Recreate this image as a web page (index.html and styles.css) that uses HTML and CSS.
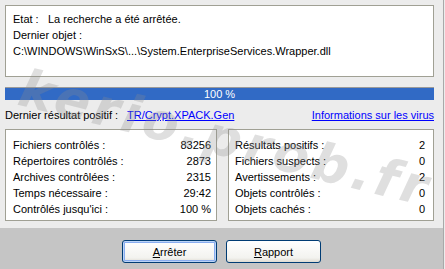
FILE: index.html
```html
<!DOCTYPE html>
<html lang="fr">
<head>
    <meta charset="UTF-8">
    <title>Analyse</title>
    <link rel="stylesheet" href="styles.css">
</head>
<body>

<div class="window">
    <div class="panel">
        <!-- Etat de la recherche -->
        <div class="status-box">
            <div class="line"><span class="status-label">Etat :</span>La recherche a été arrêtée.</div>
            <div class="line">Dernier objet :</div>
            <div class="line">C:\WINDOWS\WinSxS\...\System.EnterpriseServices.Wrapper.dll</div>
        </div>

        <div class="progress"><span>100 %</span></div>

        <div class="last-result">
            <span class="last-label">Dernier résultat positif :</span>
            <a href="#" class="link">TR/Crypt.XPACK.Gen</a>
            <a href="#" class="link info">Informations sur les virus</a>
        </div>

        <!-- Compteurs -->
        <div class="stats">
            <div class="stat-box left">
                <div class="row"><span>Fichiers contrôlés :</span><span>83256</span></div>
                <div class="row"><span>Répertoires contrôlés :</span><span>2873</span></div>
                <div class="row"><span>Archives contrôlées :</span><span>2315</span></div>
                <div class="row"><span>Temps nécessaire :</span><span>29:42</span></div>
                <div class="row"><span>Contrôlés jusqu'ici :</span><span>100 %</span></div>
            </div>
            <div class="stat-box right">
                <div class="row"><span>Résultats positifs :</span><span>2</span></div>
                <div class="row"><span>Fichiers suspects :</span><span>0</span></div>
                <div class="row"><span>Avertissements :</span><span>2</span></div>
                <div class="row"><span>Objets contrôlés :</span><span>0</span></div>
                <div class="row"><span>Objets cachés :</span><span>0</span></div>
            </div>
        </div>
    </div>

    <div class="button-bar">
        <button class="btn default"><u>A</u>rrêter</button>
        <button class="btn"><u>R</u>apport</button>
    </div>

    <!-- filigrane -->
    <div class="watermark">kerio.prob.fr</div>
</div>

</body>
</html>
```

FILE: styles.css
```css
body {
    margin: 0;
    padding: 0;
    background-color: #ececec;
    font-family: "Liberation Sans", Arial, sans-serif;
    font-size: 11px;
    color: #000;
    overflow: hidden;
}

.window {
    position: relative;
    width: 443px;
    height: 269px;
    border-right: 1px solid #a9a9a9;
    overflow: hidden;
}

.panel {
    height: 228px;
    padding: 5px 9px 0 5px;
    box-sizing: border-box;
}

.status-box {
    height: 72px;
    box-sizing: border-box;
    background-color: #fff;
    border: 1px solid #a0a094;
    padding: 5px 7px;
}

.line {
    line-height: 16px;
    white-space: nowrap;
}

.status-label {
    display: inline-block;
    width: 35px;
}

.progress {
    margin-top: 10px;
    height: 13px;
    box-sizing: border-box;
    border-top: 1px solid #9a9a9a;
    background-color: #316ac5;
    color: #fff;
    text-align: center;
    line-height: 12px;
    font-size: 11px;
}

.last-result {
    margin-top: 7px;
    display: flex;
    line-height: 16px;
}

.last-label {
    width: 122px;
}

.link {
    color: #0000ff;
    text-decoration: underline;
}

.info {
    margin-left: auto;
}

.stats {
    margin-top: 6px;
    display: grid;
    grid-template-columns: 212px 206px;
    column-gap: 11px;
}

.stat-box {
    height: 92px;
    box-sizing: border-box;
    background-color: #fff;
    border: 1px solid #a0a094;
    padding: 7px 5px 3px 7px;
}

.stat-box.right {
    padding: 7px 8px 3px 6px;
}

.row {
    display: flex;
    justify-content: space-between;
    line-height: 16px;
}

.button-bar {
    height: 41px;
    background-color: #c5c5c5;
    display: flex;
    justify-content: center;
    gap: 9px;
    padding-top: 12px;
    box-sizing: border-box;
}

.btn {
    width: 95px;
    height: 23px;
    font-family: "Liberation Sans", Arial, sans-serif;
    font-size: 11px;
    color: #000;
    background: linear-gradient(#ffffff, #f3f3ef 80%, #dedbd2);
    border: 1px solid #003c74;
    border-radius: 3px;
    padding: 0;
}

.btn.default {
    box-shadow: inset 0 0 0 1px #bcd4f6, inset 0 0 0 2px #89adf0;
}

/* filigrane par-dessus le panneau */
.watermark {
    position: absolute;
    left: 14px;
    top: 60px;
    font-family: "DejaVu Sans", sans-serif;
    font-size: 52px;
    line-height: 52px;
    font-weight: bold;
    font-style: italic;
    letter-spacing: 4px;
    color: rgba(140, 140, 140, 0.28);
    transform: rotate(14deg);
    transform-origin: left bottom;
    white-space: nowrap;
    pointer-events: none;
}
```
